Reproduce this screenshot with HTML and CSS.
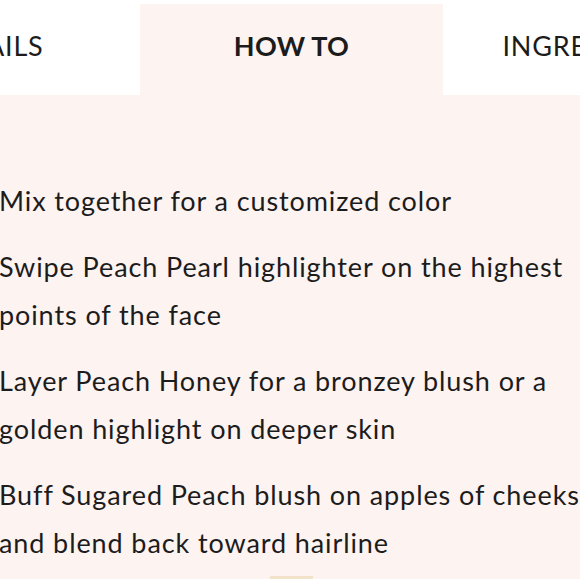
FILE: index.html
```html
<!DOCTYPE html>
<html lang="en">
<head>
<meta charset="utf-8">
<title>How To</title>
<link rel="stylesheet" href="styles.css">
</head>
<body>
<div class="page">
  <nav class="tabs">
    <div class="tab">DETAILS</div>
    <div class="tab tab-active">HOW TO</div>
    <div class="tab">INGREDIENTS</div>
  </nav>
  <section class="panel">
    <ul class="steps">
      <li>Mix together for a customized color</li>
      <li>Swipe Peach Pearl highlighter on the highest points of the face</li>
      <li>Layer Peach Honey for a bronzey blush or a golden highlight on deeper skin</li>
      <li>Buff Sugared Peach blush on apples of cheeks and blend back toward hairline</li>
    </ul>
    <div class="more"><span class="more-bar"></span></div>
  </section>
</div>
</body>
</html>
```
FILE: styles.css
```css
html, body {
  margin: 0;
  padding: 0;
  background: #ffffff;
  overflow: hidden;
}
body {
  font-family: Lato, "Noto Sans", sans-serif;
  color: #1c1c1c;
}
.page {
  width: 909px;
  margin-left: -163px;
}
.tabs {
  display: grid;
  grid-template-columns: 303px 303px 303px;
  height: 95px;
  align-items: stretch;
}
.tab {
  display: flex;
  align-items: center;
  justify-content: center;
  font-size: 27px;
  letter-spacing: 0.8px;
  color: #1c1c1c;
  background: #ffffff;
  padding-bottom: 4px;
}
.tab-active {
  margin-top: 4px;
  background: #fdf3f1;
  font-weight: 700;
  letter-spacing: 0.3px;
  padding-bottom: 8px;
}
.panel {
  background: #fdf3f1;
  padding: 82px 0 0 163px;
  height: 520px;
}
.steps {
  list-style: none;
  margin: 0;
  padding: 0;
  width: 625px;
  display: flex;
  flex-direction: column;
  gap: 18px;
}
.steps li {
  font-size: 27px;
  letter-spacing: 0.9px;
  line-height: 48px;
  margin-left: -1px;
}
.more {
  display: flex;
  padding: 9px 0 0 270px;
}
.more-bar {
  display: block;
  width: 43px;
  height: 8px;
  background: #f1e2c9;
}
```
